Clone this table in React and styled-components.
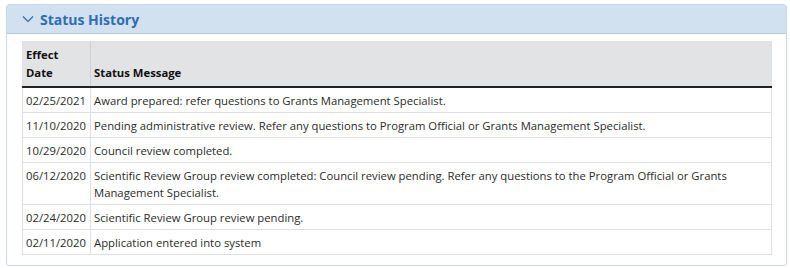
import styled, { createGlobalStyle } from "styled-components";

const GlobalStyle = createGlobalStyle`
    body {
        margin: 0;
        background: #fff;
        font-family: "Open Sans", "Liberation Sans", sans-serif;
    }
`;

const Page = styled.div`
    padding: 4px 3px 0 6px;
`;

const Panel = styled.section`
    border: 1px solid #c9d8e8;
    border-radius: 3px;
    background: #fff;
    padding-bottom: 10px;
`;

const PanelHeader = styled.div`
    display: flex;
    align-items: center;
    gap: 6px;
    height: 28px;
    padding-left: 15px;
    background: #d1e1f0;
    border-bottom: 1px solid #b9c9d9;
`;

const Title = styled.h2`
    margin: 0;
    font-size: 14px;
    font-weight: 700;
    color: #2d6db3;
`;

const Body = styled.div`
    padding: 7px 14px 0 15px;
`;

const Table = styled.table`
    width: 100%;
    border-collapse: collapse;
    border: 1px solid #dcdfe3;
    font-size: 11.3px;
    color: #2b2b2b;
`;

const HeadCell = styled.th`
    text-align: left;
    vertical-align: bottom;
    font-weight: 700;
    color: #111;
    line-height: 18px;
    padding: 4px 4px 4px 3px;
    background: #e2e3e5;
    border-bottom: 2px solid #222;
    border-left: 1px solid #cfd1d4;
    width: ${props => props.narrow ? "60px" : "auto"};
    &:first-child { border-left: none; }
`;

const Cell = styled.td`
    vertical-align: top;
    line-height: 17px;
    padding: 4px 40px 3px 3px;
    border-top: 1px solid #dcdfe3;
    border-left: 1px solid #dcdfe3;
    white-space: ${props => props.nowrap ? "nowrap" : "normal"};
    &:first-child { border-left: none; padding-right: 3px; }
`;

const history = [
    ["02/25/2021", "Award prepared: refer questions to Grants Management Specialist."],
    ["11/10/2020", "Pending administrative review. Refer any questions to Program Official or Grants Management Specialist."],
    ["10/29/2020", "Council review completed."],
    ["06/12/2020", "Scientific Review Group review completed: Council review pending. Refer any questions to the Program Official or Grants Management Specialist."],
    ["02/24/2020", "Scientific Review Group review pending."],
    ["02/11/2020", "Application entered into system"],
];

function Chevron() {
    return (
        <svg width="12" height="8" viewBox="0 0 12 8" fill="none">
            <path d="M1 1.5 L6 6.5 L11 1.5" stroke="#2d6db3" strokeWidth="1.2" />
        </svg>
    );
}

export default function App() {
    return (
        <Page>
            <GlobalStyle />
            <Panel>
                <PanelHeader>
                    <Chevron />
                    <Title>Status History</Title>
                </PanelHeader>
                <Body>
                    <Table>
                        <thead>
                            <tr>
                                <HeadCell narrow>Effect<br />Date</HeadCell>
                                <HeadCell>Status Message</HeadCell>
                            </tr>
                        </thead>
                        <tbody>
                            {history.map(([date, msg]) => (
                                <tr key={date}>
                                    <Cell nowrap>{date}</Cell>
                                    <Cell>{msg}</Cell>
                                </tr>
                            ))}
                        </tbody>
                    </Table>
                </Body>
            </Panel>
        </Page>
    );
}
